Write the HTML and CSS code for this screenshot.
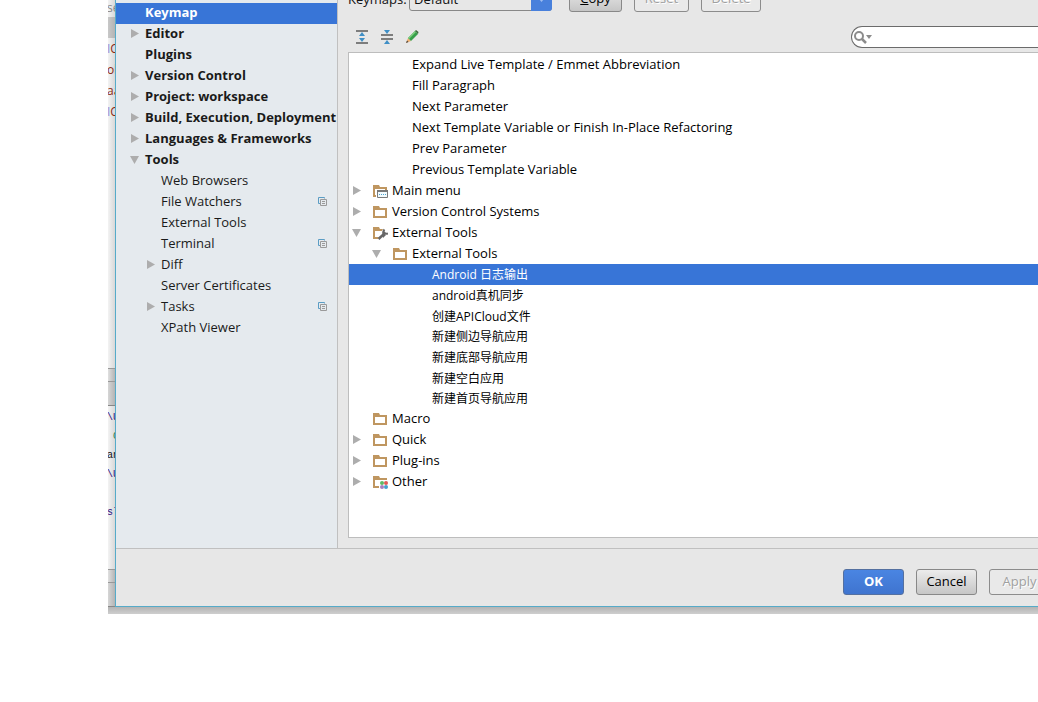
FILE: index.html
```html
<!DOCTYPE html>
<html lang="en">
<head>
<meta charset="utf-8">
<title>Settings - Keymap</title>
<link rel="stylesheet" href="styles.css">
</head>
<body>
<svg class="defs" aria-hidden="true">
  <symbol id="folder" viewBox="0 0 15 14"><path fill="#bf9660" fill-rule="evenodd" d="M0 1h6l1 2h7v10H0zM2 5v6h10V5z"/></symbol>
  <symbol id="right" viewBox="0 0 10 10"><path fill="#adadad" d="M1 0l8 4.500-8 4.500z"/></symbol>
  <symbol id="down" viewBox="0 0 10 10"><path fill="#adadad" d="M0 1h9L4.500 9z"/></symbol>
  <symbol id="copy" viewBox="0 0 10 10"><path fill="none" stroke="#5b9dc4" d="M2.500 6.500h-2v-6h6v1"/><path fill="none" stroke="#9a9a9a" d="M2.500 2.500h6v6h-6zM4 4.500h3M4 6.500h3"/></symbol>
</svg>
<div class="frame">
  <div class="editor" aria-hidden="true">
    <div class="crumb">se</div>
    <div class="band"></div>
    <div class="code"><p><i>I</i>C</p><p>ol</p><p>aa</p><p><i>I</i>C</p></div>
    <div class="splitter"></div>
    <div class="toolhead"></div>
    <div class="console"><p>\U</p><p class="green">&nbsp;C</p><p class="black">an</p><p>\U</p><p>&nbsp;</p><p>sl</p></div>
    <div class="splitter"></div>
    <div class="toolhead"></div>
  </div>
  <main class="dialog">
    <div class="body">
      <nav class="sidebar">
        <a class="item bold selected" href="#"><span class="label">Keymap</span></a>
        <a class="item bold" href="#"><svg class="arrow"><use href="#right"/></svg><span class="label">Editor</span></a>
        <a class="item bold" href="#"><span class="label">Plugins</span></a>
        <a class="item bold" href="#"><svg class="arrow"><use href="#right"/></svg><span class="label">Version Control</span></a>
        <a class="item bold" href="#"><svg class="arrow"><use href="#right"/></svg><span class="label">Project: workspace</span></a>
        <a class="item bold" href="#"><svg class="arrow"><use href="#right"/></svg><span class="label">Build, Execution, Deployment</span></a>
        <a class="item bold" href="#"><svg class="arrow"><use href="#right"/></svg><span class="label">Languages &amp; Frameworks</span></a>
        <a class="item bold" href="#"><svg class="arrow"><use href="#down"/></svg><span class="label">Tools</span></a>
        <a class="item sub" href="#"><span class="label">Web Browsers</span></a>
        <a class="item sub" href="#"><span class="label">File Watchers</span><svg class="copy"><use href="#copy"/></svg></a>
        <a class="item sub" href="#"><span class="label">External Tools</span></a>
        <a class="item sub" href="#"><span class="label">Terminal</span><svg class="copy"><use href="#copy"/></svg></a>
        <a class="item sub" href="#"><svg class="arrow"><use href="#right"/></svg><span class="label">Diff</span></a>
        <a class="item sub" href="#"><span class="label">Server Certificates</span></a>
        <a class="item sub" href="#"><svg class="arrow"><use href="#right"/></svg><span class="label">Tasks</span><svg class="copy"><use href="#copy"/></svg></a>
        <a class="item sub" href="#"><span class="label">XPath Viewer</span></a>
      </nav>
      <section class="content">
        <div class="keymaps">
          <label for="keymap">Keymaps:</label>
          <span class="combo"><select id="keymap"><option>Default</option></select><svg class="combo-arrow" viewBox="0 0 21 24"><path fill="#9dbcf0" d="M8 12h5l-2.500 3z"/></svg></span>
          <button class="btn copy-btn"><u>C</u>opy</button>
          <button class="btn reset" disabled>Reset</button>
          <button class="btn delete" disabled>Delete</button>
        </div>
        <div class="toolbar">
          <button class="tool" aria-label="Expand all"><svg viewBox="0 0 14 14"><path fill="#7d7d7d" d="M1 0h12v2H1zM1 12h12v2H1z"/><path fill="#3f8fc6" d="M7 2l3 4H4zM7 12L4 8h6z"/></svg></button>
          <button class="tool" aria-label="Collapse all"><svg viewBox="0 0 14 14"><path fill="#7d7d7d" d="M1 4h12v2H1zM1 8h12v2H1z"/><path fill="#3f8fc6" d="M4 0h6L7 4zM7 10l3 4H4z"/></svg></button>
          <button class="tool" aria-label="Edit"><svg viewBox="0 0 14 14"><path fill="#f0b070" d="M1 13l2-5 3 3z"/><path fill="#444" d="M1 13l1-2.500L3.500 12z"/><path fill="#36a04a" d="M3 8l7-7 3 3-7 7z"/><path fill="#7fd07f" d="M3 8l7-7 1 1-7 7z"/><path fill="#3b6b3b" d="M10 1l1-1 2.500 2L13 4z"/></svg></button>
          <div class="search">
            <svg viewBox="0 0 20 14"><circle cx="6" cy="6" r="4" fill="none" stroke="#8c8c8c" stroke-width="2"/><path stroke="#8c8c8c" stroke-width="2.500" d="M9 9l4 4"/><path fill="#8c8c8c" d="M13 5h6l-3 4z"/></svg>
            <input type="text" aria-label="Search actions">
          </div>
        </div>
        <div class="tree" role="tree">
          <div class="row d2"><span>Expand Live Template / Emmet Abbreviation</span></div>
          <div class="row d2"><span>Fill Paragraph</span></div>
          <div class="row d2"><span>Next Parameter</span></div>
          <div class="row d2"><span>Next Template Variable or Finish In-Place Refactoring</span></div>
          <div class="row d2"><span>Prev Parameter</span></div>
          <div class="row d2"><span>Previous Template Variable</span></div>
          <div class="row"><svg class="arrow"><use href="#right"/></svg><svg class="folder" viewBox="0 0 15 14"><use href="#folder"/><path fill="#fff" d="M3 6h12v8H3z"/><path fill="#f2fafd" stroke="#7a7a7a" d="M4.500 7.500h10v6h-10z"/><path fill="#777" d="M4 6h11v2H4z"/><path stroke="#4aa3cf" stroke-dasharray="1 1" d="M6 10.500h7"/></svg><span>Main menu</span></div>
          <div class="row"><svg class="arrow"><use href="#right"/></svg><svg class="folder"><use href="#folder"/></svg><span>Version Control Systems</span></div>
          <div class="row"><svg class="arrow"><use href="#down"/></svg><svg class="folder" viewBox="0 0 15 14"><use href="#folder"/><path fill="#fff" d="M5 13l5-10h5v11H5z"/><path stroke="#666" stroke-width="2.500" d="M5.500 13l6-5.500"/><path fill="none" stroke="#666" stroke-width="2" d="M11.500 3.500c-2 2 0 5 3.500 4"/><path fill="#666" d="M9 5l4 4-3 3z"/></svg><span>External Tools</span></div>
          <div class="row d1"><svg class="arrow"><use href="#down"/></svg><svg class="folder"><use href="#folder"/></svg><span>External Tools</span></div>
          <div class="row d3 selected"><span>Android 日志输出</span></div>
          <div class="row d3"><span>android真机同步</span></div>
          <div class="row d3 short"><span>创建APICloud文件</span></div>
          <div class="row d3"><span>新建侧边导航应用</span></div>
          <div class="row d3"><span>新建底部导航应用</span></div>
          <div class="row d3"><span>新建空白应用</span></div>
          <div class="row d3 last"><span>新建首页导航应用</span></div>
          <div class="row"><span class="arrow"></span><svg class="folder"><use href="#folder"/></svg><span>Macro</span></div>
          <div class="row"><svg class="arrow"><use href="#right"/></svg><svg class="folder"><use href="#folder"/></svg><span>Quick</span></div>
          <div class="row"><svg class="arrow"><use href="#right"/></svg><svg class="folder"><use href="#folder"/></svg><span>Plug-ins</span></div>
          <div class="row"><svg class="arrow"><use href="#right"/></svg><svg class="folder" viewBox="0 0 15 14"><use href="#folder"/><path fill="#fff" d="M6 5h9v9H6z"/><circle cx="9" cy="8" r="2" fill="#5fb865"/><circle cx="13" cy="8" r="2" fill="#e05a55"/><circle cx="9" cy="12" r="2" fill="#a77fc0"/><circle cx="13" cy="12" r="2" fill="#459fd0"/></svg><span>Other</span></div>
        </div>
      </section>
    </div>
    <footer class="footer">
      <button class="btn primary">OK</button>
      <button class="btn">Cancel</button>
      <button class="btn" disabled>Apply</button>
    </footer>
  </main>
</div>
<div class="shadow"></div>
</body>
</html>
```
FILE: styles.css
```css
* { box-sizing: border-box; }
body {
  margin: 0;
  background: #fff;
  overflow: hidden;
  font: 13px/21px "Open Sans", "Noto Sans CJK SC", sans-serif;
  color: #111;
}
p { margin: 0; }
button, input, select { font: inherit; }
.defs { position: absolute; width: 0; height: 0; }
.frame { display: flex; margin: -16px 0 0 108px; }

.editor {
  flex: none;
  width: 7px;
  display: flex;
  flex-direction: column;
  overflow: hidden;
  background: linear-gradient(to right, #f3f3f3, #d8d8d8);
  font-size: 12px;
  white-space: nowrap;
  text-indent: -1px;
}
.crumb { height: 33px; padding-top: 13px; color: #888; }
.band { height: 21px; background: linear-gradient(to right, #c8c8c8, #b4b4b4); }
.code { flex: 1; color: #8b2a12; }
.code i { color: #8f8fd8; font-style: normal; }
.splitter { height: 14px; border: solid #999; border-width: 1px 0; background: linear-gradient(to right, #e0e0e0, #b4b4b4); }
.toolhead { height: 24px; border-bottom: 1px solid #888; background: linear-gradient(to right, #d6d6d6, #b4b4b4); }
.console { height: 163px; padding-top: 2px; font: 10px/19px "Liberation Mono", monospace; text-indent: -1px; color: #2c1580; }
.green { color: #2c7a4c; }
.black { color: #111; }

.dialog {
  flex: 1;
  min-width: 0;
  overflow: hidden;
  background: #e7e7e7;
  border: solid #56abc9;
  border-width: 0 0 1px 1px;
}
.body { display: flex; border-bottom: 1px solid #c0c0c0; }
.sidebar {
  flex: none;
  width: 222px;
  padding-top: 19px;
  background: #e5eaee;
  border-right: 1px solid #c0c0c0;
}
.item {
  display: flex;
  align-items: center;
  height: 21px;
  padding: 0 9px 2px 29px;
  color: #1a1a1a;
  text-decoration: none;
  white-space: nowrap;
}
.sub { padding-left: 45px; }
.bold { font-weight: 700; }
.label { flex: 1; }
.item.selected, .row.selected { background: #3875d7; color: #fff; }
.arrow { flex: none; width: 10px; height: 10px; }
.item .arrow { margin: 0 5px 0 -15px; }
.copy { width: 10px; height: 10px; }

.content { flex: 1; min-width: 0; padding: 2px 0 10px 10px; }
.keymaps { display: flex; align-items: center; height: 26px; white-space: nowrap; }
.keymaps label { width: 61px; }
.combo { position: relative; width: 143px; height: 24px; margin-right: 17px; }
.combo select {
  width: 100%;
  height: 24px;
  padding: 0 0 0 4px;
  appearance: none;
  border: 1px solid #888;
  border-radius: 3px;
  background: #e7e7e7;
  color: #111;
}
.combo-arrow { position: absolute; top: 0; right: 0; width: 21px; height: 24px; background: #4880dc; border-radius: 0 3px 3px 0; pointer-events: none; }
.btn {
  flex: none;
  height: 26px;
  padding: 0 0 2px;
  border: 1px solid #888;
  border-radius: 3px;
  background: linear-gradient(#ececec, #c6c6c6);
  color: #000;
}
.btn:disabled { background: #e9e9e9; color: #a0a0a0; border-color: #8c8c8c; text-shadow: 1px 1px #fff; }
.primary { background: linear-gradient(#4a85e2, #3f74cf); border-color: #5470a0; color: #fff; font-weight: 700; }
.copy-btn { width: 53px; margin-right: 12px; }
.reset { width: 55px; margin-right: 12px; }
.delete { width: 60px; }

.toolbar { display: flex; align-items: center; height: 40px; padding-top: 9px; }
.tool { flex: none; width: 25px; height: 18px; padding: 0 4px 0 7px; border: 0; background: none; }
.tool svg { display: block; width: 14px; height: 14px; }
.search {
  display: flex;
  align-items: center;
  flex: 1;
  height: 22px;
  margin-left: 428px;
  padding-left: 1px;
  border: 1px solid #6b6b6b;
  border-right: 0;
  border-radius: 11px 0 0 11px;
  background: #fff;
}
.search svg { flex: none; width: 20px; height: 14px; }
.search input { flex: 1; min-width: 0; height: 18px; border: 0; outline: 0; background: none; }

.tree {
  height: 486px;
  padding-top: 1px;
  border: solid #bdbdbd;
  border-width: 1px 0 1px 1px;
  background: #fff;
  color: #000;
}
.row { display: flex; align-items: center; height: 21px; padding-left: 3px; white-space: nowrap; }
.row.d1 { padding-left: 23px; }
.row.d2 { padding-left: 63px; }
.row.d3 { padding-left: 83px; font-size: 12px; }
.row.short { height: 20px; }
.row.last { height: 19px; }
.folder { flex: none; width: 15px; height: 14px; margin: 0 4px 0 11px; }

.footer { display: flex; justify-content: flex-end; gap: 12px; padding: 20px 0 11px; margin-right: -12px; }
.footer .btn { width: 61px; }
.shadow { height: 7px; margin-left: 108px; background: linear-gradient(#b4b4b4, #cecece); }
```
